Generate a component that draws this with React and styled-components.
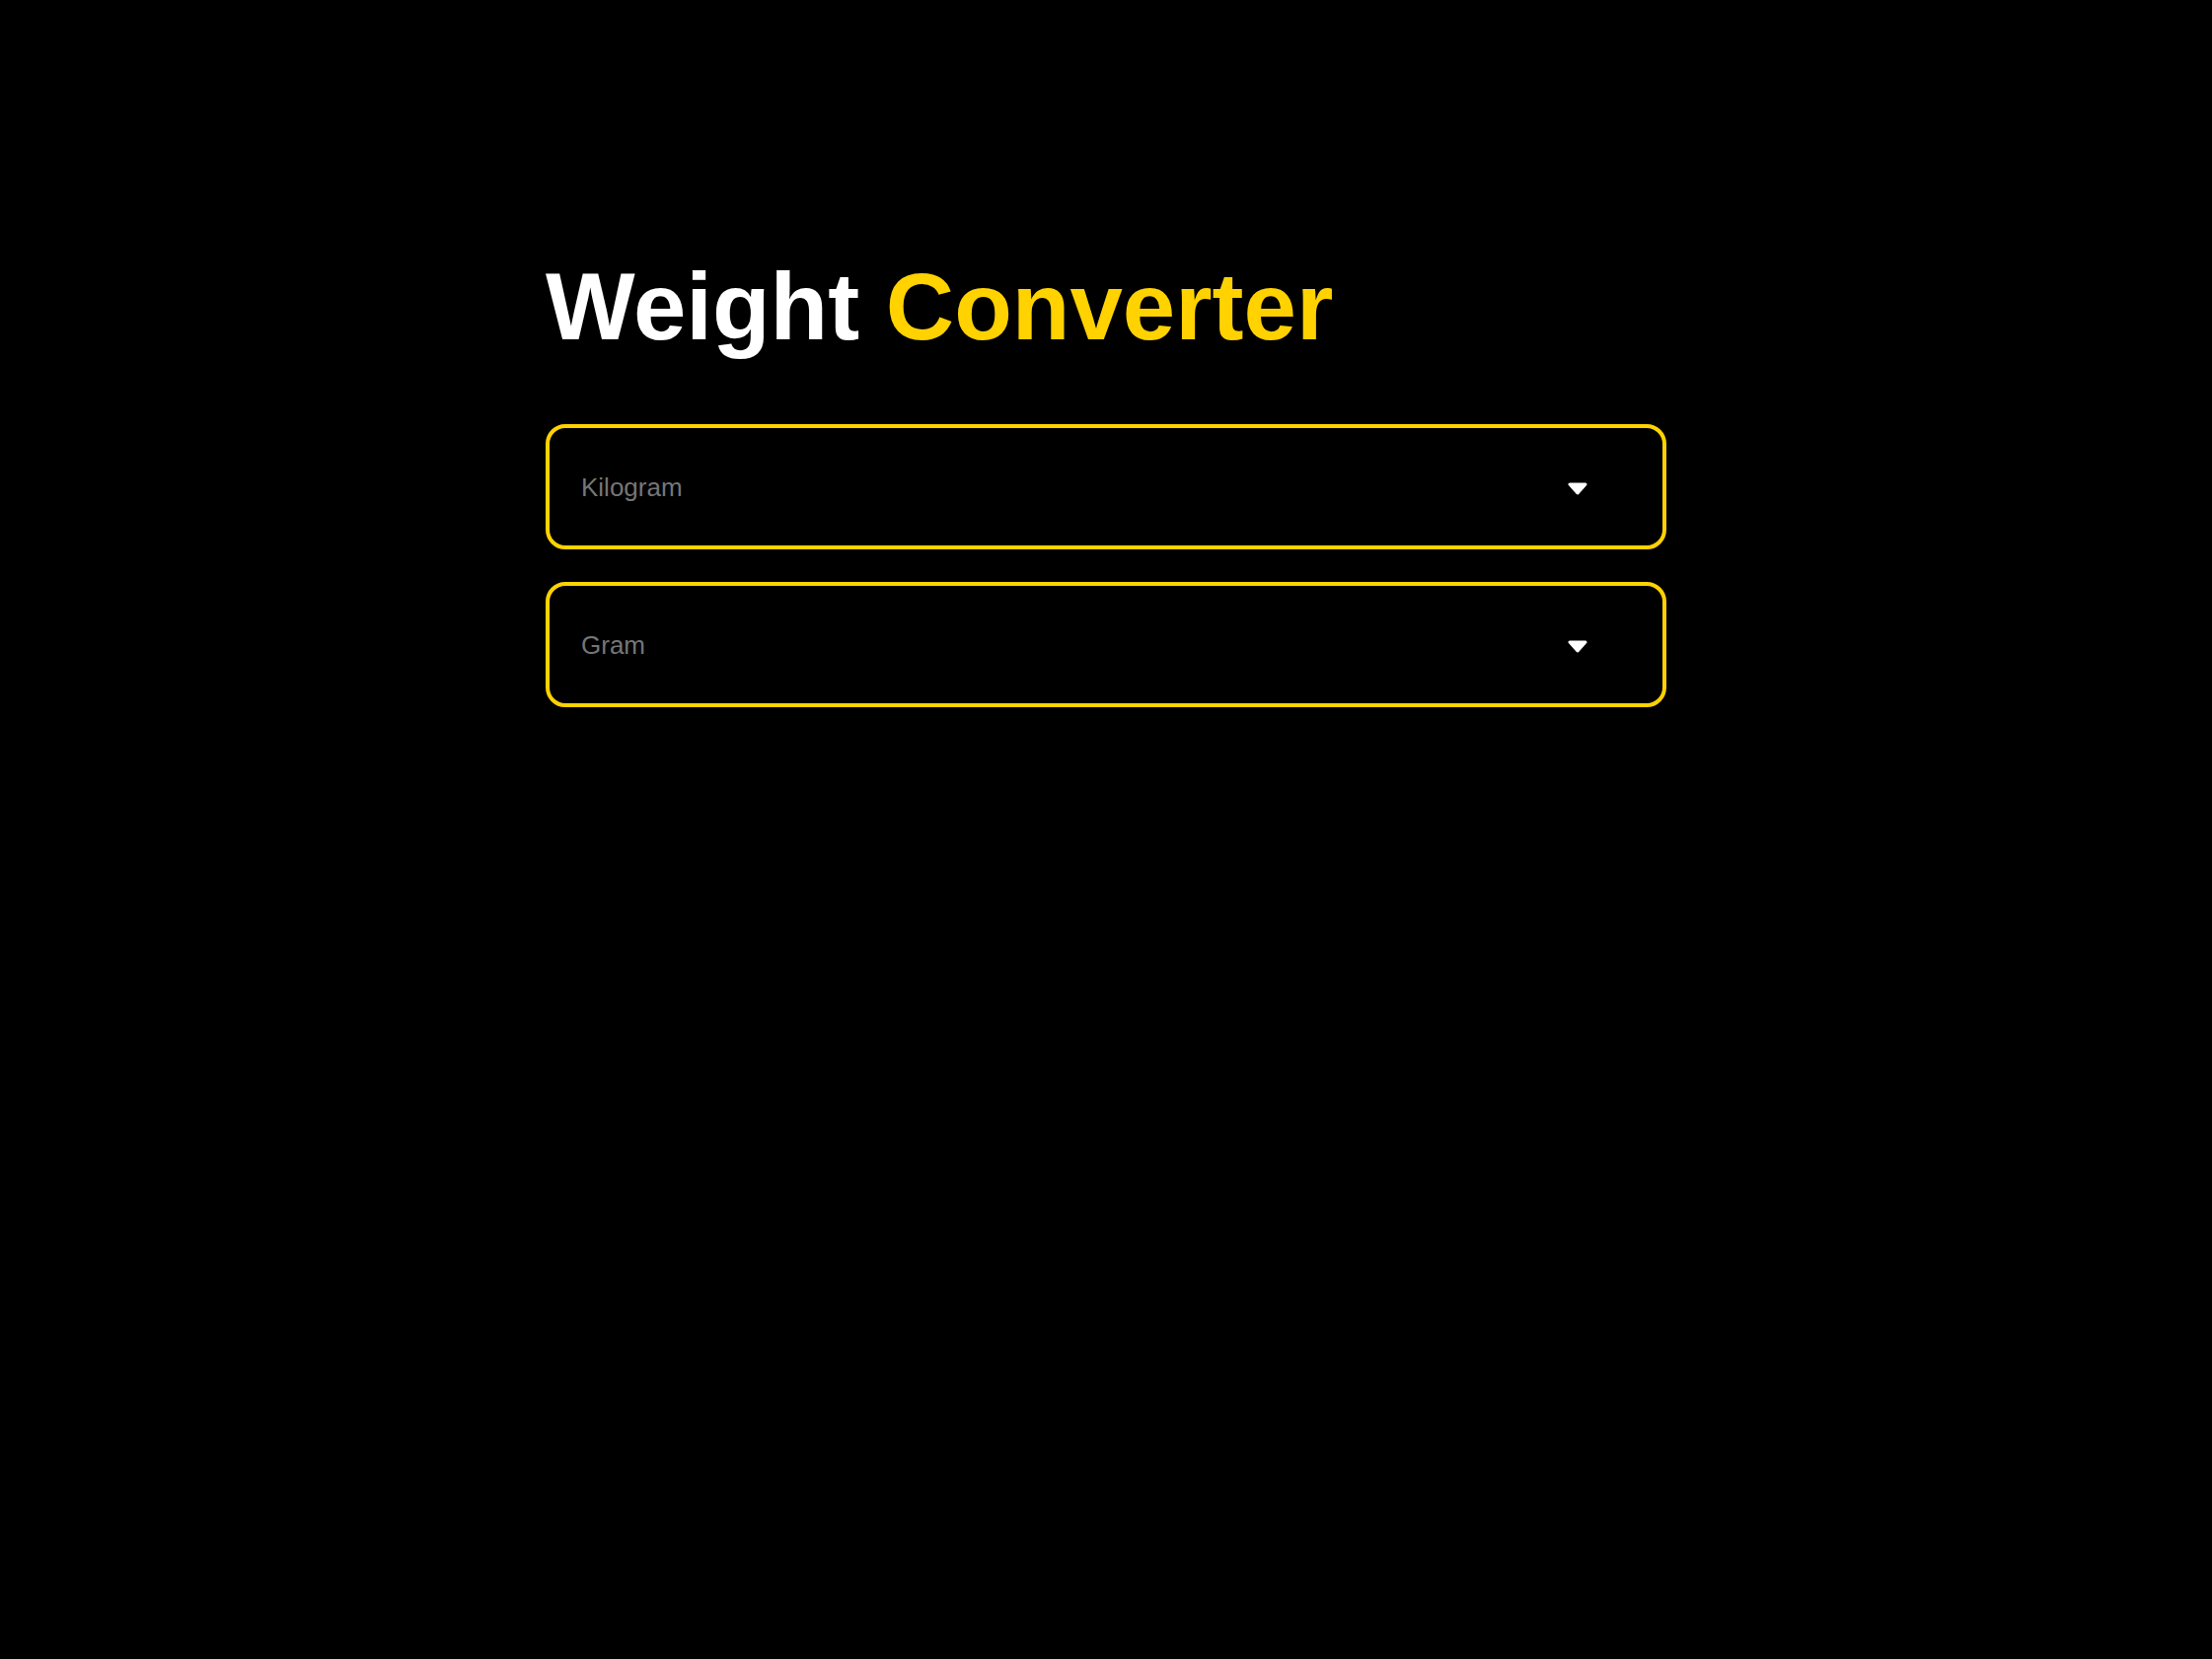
import React from 'react'
import styled, { createGlobalStyle } from 'styled-components'

const GlobalStyle = createGlobalStyle`
    html, body {
        margin: 0;
        padding: 0;
        background: #000;
    }
    * {
        box-sizing: border-box;
    }
`;

const Page = styled.div`
    min-height: 100vh;
    background-color: #000;
    font-family: "Liberation Sans", Arial, Helvetica, sans-serif;
    padding-top: 263px;
`;

const Container = styled.div`
    width: 1136px;
    margin: 0 auto;
    display: flex;
    flex-direction: column;
    gap: 33px;
`;

const Title = styled.h1`
    margin: 0 0 38px 0;
    font-size: 96px;
    line-height: 1;
    font-weight: 700;
    color: #fff;
`;

const Accent = styled.span`
    color: #ffd200;
`;

const SelectBox = styled.div`
    height: 127px;
    border: 4px solid #ffd200;
    border-radius: 20px;
    padding: 2px 76px 0 32px;
    display: flex;
    align-items: center;
    justify-content: space-between;
    cursor: pointer;
`;

const SelectText = styled.span`
    font-size: 26px;
    color: #767676;
`;

const CaretIcon = styled.svg`
    margin-top: 2px;
`;

const Caret = () => (
    <CaretIcon width="20" height="13" viewBox="0 0 20 13">
        <path
            d="M2 2 L18 2 L10 11 Z"
            fill="#fff"
            stroke="#fff"
            strokeWidth="3"
            strokeLinejoin="round"
        />
    </CaretIcon>
);

const Select = ({ label }) => (
    <SelectBox>
        <SelectText>{label}</SelectText>
        <Caret />
    </SelectBox>
);

const App = () => {
  return (
    <Page>
        <GlobalStyle />
        <Container>
            <Title>
                Weight <Accent>Converter</Accent>
            </Title>
            <Select label="Kilogram" />
            <Select label="Gram" />
        </Container>
    </Page>
  )
}

export default App
